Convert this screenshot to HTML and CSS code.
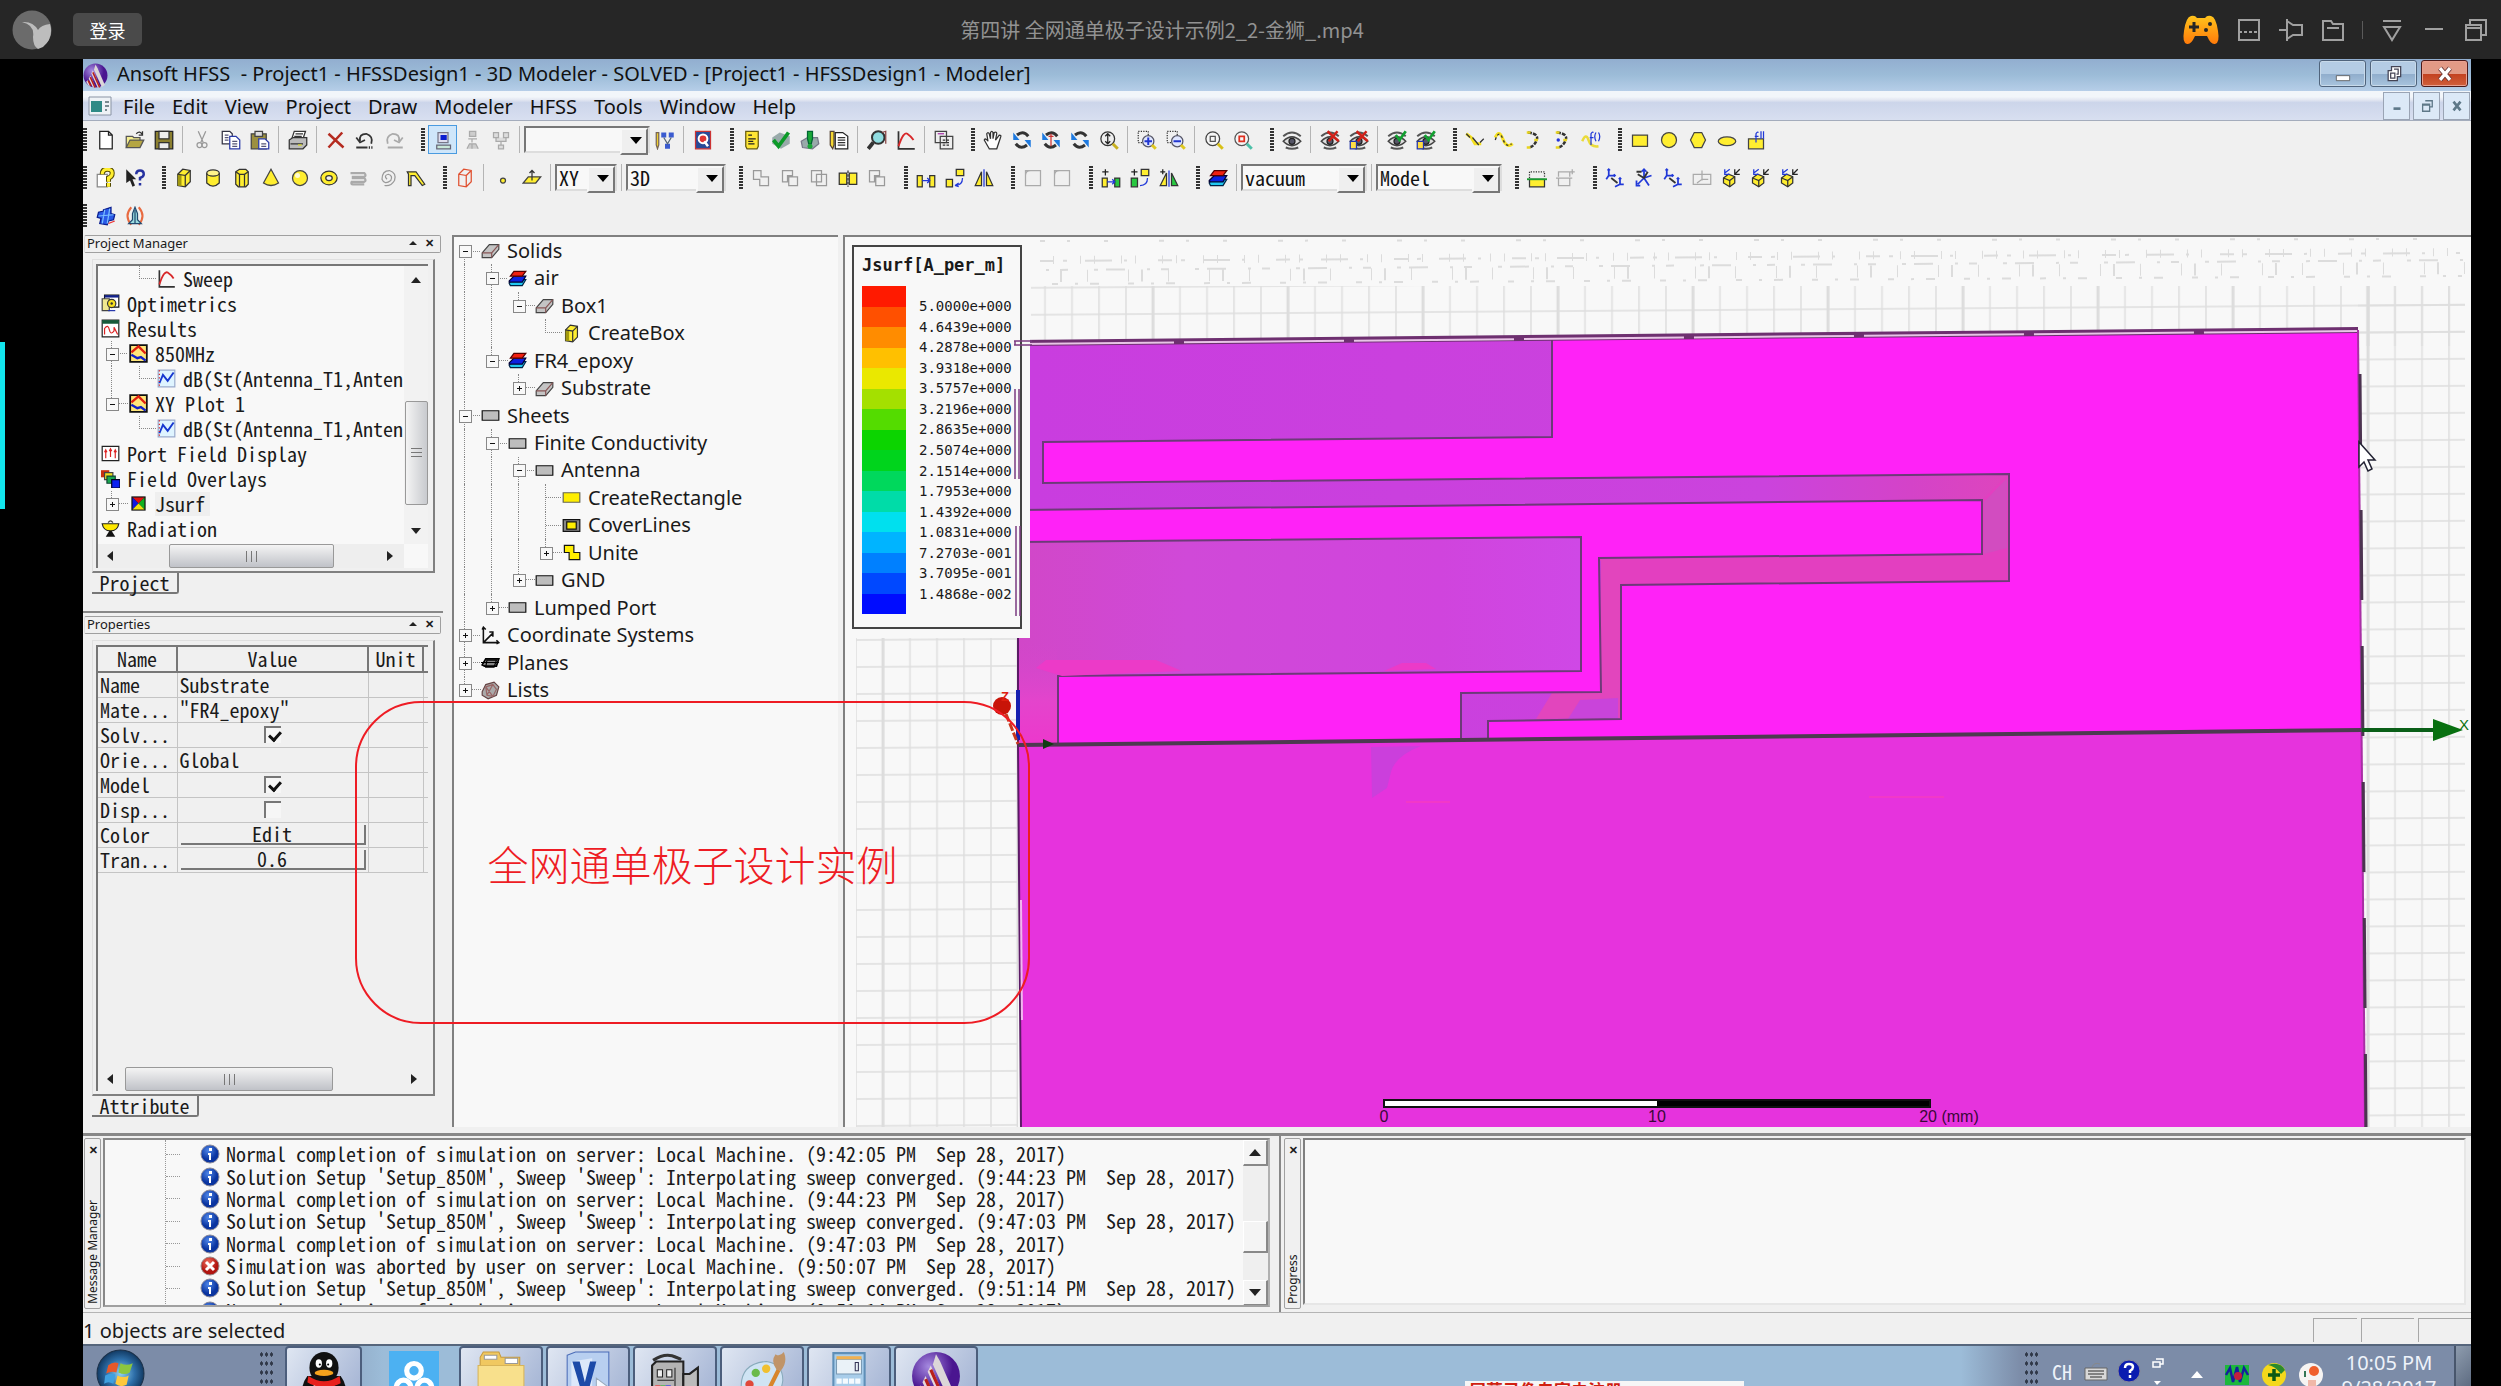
FILE: index.html
```html
<!DOCTYPE html>
<html lang="zh-CN">
<head>
<meta charset="utf-8">
<title>第四讲 全网通单极子设计示例2_2-金狮_.mp4</title>
<link rel="stylesheet" href="styles.css">
</head>
<body>
<svg class="defs" aria-hidden="true">
<defs>
<linearGradient id="pad" x2="0" y2="1"><stop stop-color="#ffc41c"/><stop offset="1" stop-color="#ff7a0a"/></linearGradient>
<radialGradient id="orb"><stop stop-color="#8fd0f0"/><stop offset=".6" stop-color="#2d6ea8"/><stop offset="1" stop-color="#123a63"/></radialGradient>
<radialGradient id="purple" cx=".35" cy=".3"><stop stop-color="#a58ae0"/><stop offset="1" stop-color="#4a1590"/></radialGradient>
<radialGradient id="info" cx=".4" cy=".3"><stop stop-color="#4f86e8"/><stop offset="1" stop-color="#0a34a0"/></radialGradient>
<radialGradient id="err" cx=".4" cy=".3"><stop stop-color="#f07060"/><stop offset="1" stop-color="#b01510"/></radialGradient>
</defs>
<symbol id="new" viewBox="0 0 16 16"><path d="M3 1h7l3 3v11H3zM10 1v3h3" fill="#fff" stroke="#222"/></symbol>
<symbol id="open" viewBox="0 0 16 16"><path d="M1 14V5h5l1 1h5v3" fill="#f5ee90" stroke="#555"/><path d="M1 14l3-6h11l-3 6z" fill="#b5a642" stroke="#555"/><path d="M9 3q3-3 5 1m0-3v3h-3" fill="none" stroke="#333"/></symbol>
<symbol id="save" viewBox="0 0 16 16"><path d="M1 1h14v14H1z" fill="#8c8030" stroke="#222"/><path d="M4 1h8v6H4zM4 10h8v5H4z" fill="#eee" stroke="#333"/></symbol>
<symbol id="cut" viewBox="0 0 16 16"><path d="M5 1l4 9M11 1L7 10" stroke="#999" fill="none"/><circle cx="6" cy="12" r="2" fill="none" stroke="#999"/><circle cx="10" cy="12" r="2" fill="none" stroke="#999"/></symbol>
<symbol id="copy" viewBox="0 0 16 16"><path d="M1 1h6l2 2v8H1z" fill="#fff" stroke="#334"/><path d="M7 5h5l3 3v7H7z" fill="#fff" stroke="#2a3aa8"/><path d="M3 4h3M3 6h3M3 8h3M9 9h4M9 11h4M9 13h4" stroke="#557"/></symbol>
<symbol id="paste" viewBox="0 0 16 16"><path d="M1 3h12v12H1z" fill="#9c9040" stroke="#444"/><path d="M4 1h6v4H4z" fill="#ddd" stroke="#444"/><path d="M7 7h5l3 3v5H7z" fill="#fff" stroke="#2a3aa8"/><path d="M9 11h4M9 13h4" stroke="#557"/></symbol>
<symbol id="print" viewBox="0 0 16 16"><path d="M5 1h9l-2 6H3z" fill="#fff" stroke="#333"/><path d="M1 8l3-2h11v6l-3 3H1z" fill="#bbb" stroke="#333"/><path d="M2 11h10M6 3h6M5 5h6" stroke="#333"/><path d="M8 12h3" stroke="#dd2"/></symbol>
<symbol id="del" viewBox="0 0 16 16"><path d="M2 3l12 11M13 2L2 14" stroke="#b52b20" stroke-width="2" fill="none"/></symbol>
<symbol id="undo" viewBox="0 0 16 16"><path d="M4 9q-1-6 5-6 6 2 4 8M1 6l3 4 4-2" fill="none" stroke="#333" stroke-width="1.4"/><path d="M1 14h9" stroke="#333" stroke-width="1.6"/><path d="M11 14h4" stroke="#333" stroke-width="2" stroke-dasharray="1"/></symbol>
<symbol id="redo" viewBox="0 0 16 16"><path d="M12 9q1-6-5-6-6 2-4 8M15 6l-3 4-4-2" fill="none" stroke="#aaa" stroke-width="1.4"/><path d="M3 14h12" stroke="#aaa" stroke-width="1.6"/></symbol>
<symbol id="pc" viewBox="0 0 16 16"><path d="M4 2h8v8H4z" fill="#dde" stroke="#778"/><path d="M6 4h5v4H6z" fill="#0a1ed0"/><path d="M3 12h11v3H3z" fill="#c8e8d8" stroke="#667"/></symbol>
<symbol id="net1" viewBox="0 0 16 16"><path d="M6 1h5v4H6zM5 7h7M8 7v3M4 15l2-4h5l2 4M8 11v4" fill="#ccc" stroke="#aaa"/></symbol>
<symbol id="net2" viewBox="0 0 16 16"><path d="M2 2h4v4H2zM10 2h4v4h-4zM4 6v3h8V6M8 9v3M6 12h4v3H6z" fill="#ddd" stroke="#aaa"/></symbol>
<symbol id="tree" viewBox="0 0 16 16"><path d="M1 2h2v10l-1 3-1-3z" fill="#f0d030" stroke="#765"/><path d="M5 2h4v4H5zM11 2h4v4h-4zM8 11h4v4H8z" fill="#3a5bd0"/><path d="M7 6l3 5 3-5" stroke="#567" fill="none"/></symbol>
<symbol id="q" viewBox="0 0 16 16"><path d="M2 1h12v14H2z" fill="#284a98" stroke="#c33"/><circle cx="8" cy="7" r="3.500" fill="#d33" stroke="#fff" stroke-width="1.600"/><path d="M9 9l3 4" stroke="#fff" stroke-width="2"/></symbol>
<symbol id="log" viewBox="0 0 16 16"><path d="M3 1h10v12l-1 2H4l-1-2z" fill="#ffe633" stroke="#665c10"/><path d="M5 4h3M5 7h6M5 9h4M5 11h5" stroke="#222"/></symbol>
<symbol id="check" viewBox="0 0 16 16"><path d="M1 6l6-4 8 3v6l-7 4-7-4z" fill="#9aa"/><path d="M2 8l4 5 8-11" fill="none" stroke="#0c9a28" stroke-width="3"/></symbol>
<symbol id="excl" viewBox="0 0 16 16"><path d="M1 9l5-3h8l1 5-5 4-8-1z" fill="#9aa" stroke="#778"/><path d="M6 1h4v6l-1 4H7L6 7z" fill="#1ba838" stroke="#063"/><circle cx="8" cy="13" r="2" fill="#1ba838"/></symbol>
<symbol id="notes" viewBox="0 0 16 16"><path d="M1 1h3v11l-1 3-2-3z" fill="#f5d832" stroke="#543"/><path d="M5 2h6l4 3v10H5z" fill="#fff" stroke="#222"/><path d="M7 6h6M7 8h6M7 10h6M7 12h6" stroke="#333"/></symbol>
<symbol id="magn" viewBox="0 0 16 16"><circle cx="9" cy="6" r="5" fill="#90dce0" stroke="#333" stroke-width="1.6"/><path d="M5 10l-4 5" stroke="#333" stroke-width="3"/><path d="M12 2l3-1v10" stroke="#844" fill="none"/></symbol>
<symbol id="plot" viewBox="0 0 16 16"><path d="M2 1v14h13" fill="none" stroke="#333" stroke-width="1.4"/><path d="M2 13Q6 1 9 3t5 5" fill="none" stroke="#d8282a" stroke-width="1.5"/></symbol>
<symbol id="report" viewBox="0 0 16 16"><path d="M1 1h9v9H1zM5 5h10v10H5z" fill="#eee" stroke="#444"/><path d="M3 3h5" stroke="#a3a"/><path d="M7 8h6M7 10h6M7 12h6" stroke="#333" stroke-dasharray="2 1"/></symbol>
<symbol id="hand" viewBox="0 0 16 16"><path d="M5 15L1 8q1-2 3 1L3 3q1-2 2 0l1 4V2q1-2 2 0v5l1-5q2-1 2 1l-1 5 3-4q2 0 1 2l-3 9z" fill="#fff" stroke="#333"/></symbol>
<symbol id="rot" viewBox="0 0 16 16"><path d="M4 4q5-4 9 1" fill="none" stroke="#333" stroke-width="2.400"/><path d="M12 12q-5 4-9-1" fill="none" stroke="#333" stroke-width="2.400"/><path d="M1 2v6h5zM15 14V8h-5z" fill="#1e7ae0"/></symbol>
<symbol id="rot2" viewBox="0 0 16 16"><use href="#rot"/><path d="M8 3v10M6 5h4" stroke="#c33"/></symbol>
<symbol id="zoomv" viewBox="0 0 16 16"><circle cx="7" cy="7" r="5.5" fill="#eee" stroke="#333"/><path d="M7 3v8M5 5l2-2 2 2M5 9l2 2 2-2" stroke="#222" fill="none"/><path d="M11 11l4 4" stroke="#c8b020" stroke-width="2.4"/></symbol>
<symbol id="zin" viewBox="0 0 16 16"><path d="M1 1h8v9H1z" fill="none" stroke="#333" stroke-dasharray="1"/><circle cx="9" cy="9" r="4.5" fill="#dfe6ff" stroke="#556"/><path d="M6 9h6M9 6v6" stroke="#2035d0" stroke-width="1.6"/><path d="M12 12l3 3" stroke="#e0c820" stroke-width="2.4"/></symbol>
<symbol id="zout" viewBox="0 0 16 16"><path d="M1 1h8v9H1z" fill="none" stroke="#333" stroke-dasharray="1"/><circle cx="9" cy="9" r="4.5" fill="#dfe6ff" stroke="#556"/><path d="M6 9h6" stroke="#2035d0" stroke-width="1.6"/><path d="M12 12l3 3" stroke="#e0c820" stroke-width="2.4"/></symbol>
<symbol id="fit" viewBox="0 0 16 16"><circle cx="7" cy="7" r="5.5" fill="#f6f6f6" stroke="#444"/><path d="M5 5h4v4H5z" fill="none" stroke="#555"/><path d="M11 11l4 4" stroke="#d8c018" stroke-width="2.4"/></symbol>
<symbol id="fitr" viewBox="0 0 16 16"><circle cx="7" cy="7" r="5.5" fill="#f6f6f6" stroke="#555"/><path d="M5 5h4v4H5z" fill="none" stroke="#e03020" stroke-width="1.4"/><path d="M11 11l4 4" stroke="#4cc0a8" stroke-width="2.4"/></symbol>
<symbol id="eye" viewBox="0 0 16 16"><path d="M1 9q7-7 14 0-7 7-14 0z" fill="#ddd" stroke="#444" stroke-width="1.2"/><circle cx="8" cy="9" r="2.4" fill="#556" stroke="#222"/><path d="M1 5q7-6 14 0M3 14q5 2 10 0" fill="none" stroke="#555" stroke-width="1.6"/></symbol>
<symbol id="eyex" viewBox="0 0 16 16"><use href="#eye"/><path d="M6 1l9 8M14 1L7 9" stroke="#d02018" stroke-width="2"/></symbol>
<symbol id="eyex2" viewBox="0 0 16 16"><use href="#eyex"/><path d="M1 9h5v6H1z" fill="#fd4" stroke="#23a"/></symbol>
<symbol id="eyec" viewBox="0 0 16 16"><use href="#eye"/><path d="M7 4l3 4 5-7" stroke="#12a030" stroke-width="2.2" fill="none"/></symbol>
<symbol id="eyec2" viewBox="0 0 16 16"><use href="#eyec"/><path d="M1 9h5v6H1z" fill="#fd4" stroke="#23a"/></symbol>
<symbol id="ln" viewBox="0 0 16 16"><path d="M1 3l4 3 3 5h5" fill="none" stroke="#f5e020" stroke-width="2.4"/><path d="M1 3l3 3M6 6l5 6M12 10l3-3" stroke="#333"/></symbol>
<symbol id="spl" viewBox="0 0 16 16"><path d="M1 6q3-7 6 1t8 4" fill="none" stroke="#f5e020" stroke-width="2.4"/><path d="M1 8q3-9 6-1t7 4" fill="none" stroke="#333" stroke-dasharray="2"/></symbol>
<symbol id="arc" viewBox="0 0 16 16"><path d="M4 2q9 1 7 6t-6 6" fill="none" stroke="#333" stroke-width="2" stroke-dasharray="3 1"/><path d="M3 1h3v2H3zM9 7h3v2H9zM3 13h3v2H3z" fill="#e8d420"/></symbol>
<symbol id="arc2" viewBox="0 0 16 16"><use href="#arc"/><circle cx="5" cy="8" r="1.4" fill="#23d"/></symbol>
<symbol id="eqn" viewBox="0 0 16 16"><path d="M1 9q3-7 5-1t8 5" fill="none" stroke="#eadb3a" stroke-width="2"/><path d="M8 12V3q1-2 2-1M7 6h3M12 2q-2 3 0 7M14 2q2 3 0 7" fill="none" stroke="#2038d8"/></symbol>
<symbol id="rect" viewBox="0 0 16 16"><path d="M2 4h12v9H2z" fill="#ffee30" stroke="#444"/></symbol>
<symbol id="circ" viewBox="0 0 16 16"><circle cx="8" cy="8" r="6" fill="#ffee30" stroke="#444"/></symbol>
<symbol id="hex" viewBox="0 0 16 16"><path d="M5 2h6l3 6-3 6H5L2 8z" fill="#ffee30" stroke="#444"/></symbol>
<symbol id="ell" viewBox="0 0 16 16"><ellipse cx="8" cy="9" rx="7" ry="3.500" fill="#ffee30" stroke="#444"/></symbol>
<symbol id="eqs" viewBox="0 0 16 16"><path d="M2 7h12v8H2z" fill="#ffee30" stroke="#444"/><path d="M8 10V3q1-2 2-1M7 5h3M12 1v6M14 1v6" stroke="#2038d8" fill="none"/></symbol>
<symbol id="help" viewBox="0 0 16 16"><path d="M1 5h8v10H1z" fill="#fff" stroke="#888"/><path d="M5 5q0-4 4-4t4 3q0 3-3 4v3M10 12v3" fill="none" stroke="#544a00" stroke-width="4"/><path d="M5 5q0-4 4-4t4 3q0 3-3 4v3M10 12v3" fill="none" stroke="#ffee30" stroke-width="2.4"/></symbol>
<symbol id="whats" viewBox="0 0 16 16"><path d="M1 1v11l3-2 2 5 2-1-2-5h3z" fill="#222"/><path d="M9 5q0-3 3-3t3 3q0 2-3 3v2M12 12v2" fill="none" stroke="#2632a0" stroke-width="2"/></symbol>
<symbol id="box" viewBox="0 0 16 16"><path d="M3 5l4-4 6 1v9l-4 4-6-1z" fill="#ffee30" stroke="#333"/><path d="M3 5l3 .5v9L3 14z" fill="#a39a10"/><path d="M3 5l6 1v9M9 6l4-4" fill="none" stroke="#333"/></symbol>
<symbol id="cyl" viewBox="0 0 16 16"><path d="M3 4v8q5 5 10 0V4" fill="#ffee30" stroke="#333"/><ellipse cx="8" cy="4" rx="5" ry="2.5" fill="#fff48a" stroke="#333"/></symbol>
<symbol id="prism" viewBox="0 0 16 16"><path d="M3 3l3-2h5l2 2v10l-2 2H5l-2-2z" fill="#ffee30" stroke="#333"/><path d="M6 5v10M10 5v10M3 3l3 2h4l3-2" fill="none" stroke="#333"/></symbol>
<symbol id="cone" viewBox="0 0 16 16"><path d="M8 1l6 11q-6 4-12 0z" fill="#ffee30" stroke="#444"/></symbol>
<symbol id="sph" viewBox="0 0 16 16"><circle cx="8" cy="8" r="6" fill="#ffee30" stroke="#444"/><circle cx="6" cy="6" r="2" fill="#fffbd0"/></symbol>
<symbol id="torus" viewBox="0 0 16 16"><ellipse cx="8" cy="8" rx="6.5" ry="5.5" fill="#ffee30" stroke="#333"/><ellipse cx="8" cy="8" rx="2.6" ry="2" fill="#f0f0f0" stroke="#333"/></symbol>
<symbol id="helix" viewBox="0 0 16 16"><path d="M2 4h11q2 2 0 3H3m0 1h10q2 2 0 3H3q-1 2 1 2h9" fill="none" stroke="#aaa" stroke-width="1.8"/></symbol>
<symbol id="spiral" viewBox="0 0 16 16"><path d="M8 9q-3-3 1-4 4 1 2 5-5 4-7-1 0-7 6-7 6 2 4 8-3 5-8 4" fill="none" stroke="#999"/></symbol>
<symbol id="bond" viewBox="0 0 16 16"><path d="M1 3h7l7 10-2 1-6-8H4v8H2V5z" fill="#ffee30" stroke="#333"/></symbol>
<symbol id="redbox" viewBox="0 0 16 16"><path d="M3 5l4-4 6 1v9l-4 4-6-1zM3 5l6 1v9M9 6l4-4" fill="none" stroke="#e05030"/></symbol>
<symbol id="dot" viewBox="0 0 16 16"><circle cx="8" cy="10" r="2" fill="#ffee30" stroke="#444"/></symbol>
<symbol id="plane" viewBox="0 0 16 16"><path d="M1 12l4-5h10l-4 5z" fill="#ffee30" stroke="#444"/><path d="M8 10V2M6 4l2-2 2 2" fill="none" stroke="#333"/></symbol>
<symbol id="unite" viewBox="0 0 16 16"><path d="M2 2h6v5h6v7H7V9H2z" fill="none" stroke="#999"/></symbol>
<symbol id="sub" viewBox="0 0 16 16"><path d="M2 2h8v4H6v5H2zM7 7h7v7H7z" fill="none" stroke="#999"/></symbol>
<symbol id="inter" viewBox="0 0 16 16"><path d="M2 2h8v9H2zM6 5h8v9H6z" fill="none" stroke="#999"/></symbol>
<symbol id="split" viewBox="0 0 16 16"><path d="M1 4h6v9H1zM9 4h6v9H9z" fill="#ffee30" stroke="#333"/><path d="M8 2v13" stroke="#333" stroke-dasharray="2 1"/></symbol>
<symbol id="move" viewBox="0 0 16 16"><path d="M1 6h4v9H1zM11 6h4v9h-4z" fill="#ffee30" stroke="#333"/><path d="M5 10h6M9 8l2 2-2 2" fill="none" stroke="#2038d8"/></symbol>
<symbol id="rotm" viewBox="0 0 16 16"><path d="M1 9h5v6H1zM9 1h6v5H9z" fill="#ffee30" stroke="#333"/><path d="M8 14q6 0 6-6M8 14l3-2M8 14l3 1" fill="none" stroke="#2038d8"/></symbol>
<symbol id="mirror" viewBox="0 0 16 16"><path d="M6 3v11H1zM10 3v11h5z" fill="#ffee30" stroke="#333"/><path d="M8 1v14" stroke="#2038d8"/></symbol>
<symbol id="fillet" viewBox="0 0 16 16"><path d="M2 14V6q0-4 4-4h8v12zM2 6V2h4" fill="none" stroke="#aaa"/></symbol>
<symbol id="dupa" viewBox="0 0 16 16"><path d="M1 8h4v7H1z" fill="#ffee30" stroke="#333"/><path d="M11 8h4v7h-4z" fill="#28c840" stroke="#333"/><path d="M5 11h6M9 9l2 2-2 2" fill="none" stroke="#2038d8"/><path d="M1 3h5M3.500 1v5" stroke="#222"/></symbol>
<symbol id="dupr" viewBox="0 0 16 16"><path d="M1 8h5v7H1z" fill="#28c840" stroke="#333"/><path d="M9 1h6v5H9z" fill="#ffee30" stroke="#333"/><path d="M8 14q6 0 6-6" fill="none" stroke="#2038d8"/><path d="M1 3h5M3.500 1v5" stroke="#222"/></symbol>
<symbol id="dupm" viewBox="0 0 16 16"><path d="M6 4v10H1z" fill="#ffee30" stroke="#333"/><path d="M10 4v10h5z" fill="#28c840" stroke="#333"/><path d="M8 2v13" stroke="#2038d8"/><path d="M1 3h4M3 1v4" stroke="#222"/></symbol>
<symbol id="mat" viewBox="0 0 16 16"><path d="M1 12l2-3h12l-3 5H2z" fill="#20c8f0" stroke="#024"/><path d="M1 10l4-4h10l-3 5H1z" fill="#0c20e0" stroke="#003"/><path d="M2 6l3-4h10l-3 4z" fill="#f02010" stroke="#500"/></symbol>
<symbol id="sec" viewBox="0 0 16 16"><path d="M2 9h12v6H2z" fill="#ffee30" stroke="#333"/><path d="M2 8V3h12v5" fill="none" stroke="#333" stroke-dasharray="1"/><path d="M0 9h16" stroke="#1a9a30" stroke-width="1.500"/></symbol>
<symbol id="secx" viewBox="0 0 16 16"><path d="M2 8h9v6H2zM2 7V3h9v4M0 8h13M13 1v4M11 3h4" fill="none" stroke="#aaa"/></symbol>
<symbol id="cs1" viewBox="0 0 16 16"><path d="M3 1v5h5M3 6L1 9M12 8v5h3M12 13l-4 2M2 2l1-1 1 1M11 9l1-1 1 1M7 5l1 1-1 1" fill="none" stroke="#2038d8" stroke-width="1.400"/><path d="M5 8l5 4" stroke="#333" stroke-width="1.400"/></symbol>
<symbol id="cs2" viewBox="0 0 16 16"><path d="M8 8V1M8 8l6-2M8 8l-5 5M8 8l4 6M6 3l2-2 2 2M2 10v4h3" fill="none" stroke="#2038d8" stroke-width="1.400"/><path d="M2 3h4M3 5l5 3 3-5" fill="none" stroke="#333" stroke-width="1.500"/></symbol>
<symbol id="pl2" viewBox="0 0 16 16"><path d="M1 5h14v8H1zM8 10V2M4 12l4-3h5" fill="none" stroke="#aaa"/></symbol>
<symbol id="face" viewBox="0 0 16 16"><path d="M2 8l4-3 5 2v5l-4 3-5-3z" fill="#ffee30" stroke="#333"/><path d="M2 8l5 2 4-3M7 10v5" fill="none" stroke="#333"/><path d="M3 1v4h4M3 4l4-3" fill="none" stroke="#2038d8"/><path d="M11 1v4h4M11 5l4-4" fill="none" stroke="#222"/></symbol>
<symbol id="mesh" viewBox="0 0 16 16"><path d="M6 3l6-2v5l3 1-1 4-4 1-1 3-6-1 1-4-3-1 1-4 4-1z" fill="#2a5ae8" stroke="#0a1e90"/><path d="M2 8l12-1M7 3L5 14M11 2L9 14" stroke="#7ac0ff"/><path d="M10 14l5-2" stroke="#e33"/></symbol>
<symbol id="val" viewBox="0 0 16 16"><path d="M5 1Q-1 8 5 15M11 1q6 7 0 14" fill="none" stroke="#e86a40" stroke-width="1.600"/><path d="M8 1l2 5v5l3 3H3l3-3V6z" fill="#9adce0" stroke="#224a70"/><path d="M8 3v11" stroke="#224a70"/></symbol>
<symbol id="solid" viewBox="0 0 16 16"><path d="M1 10l6-7h8v4l-6 7H1z" fill="#c4c4c4" stroke="#444"/><path d="M1 10h8l6-7M9 10v4" fill="none" stroke="#855"/></symbol>
<symbol id="sheet" viewBox="0 0 16 16"><path d="M1 4h14v8H1z" fill="#bdbdbd" stroke="#111"/></symbol>
<symbol id="ysheet" viewBox="0 0 16 16"><path d="M1 4h14v8H1z" fill="#fe0" stroke="#665"/></symbol>
<symbol id="cover" viewBox="0 0 16 16"><path d="M1 3h14v10H1z" fill="#888" stroke="#111"/><path d="M4 5h8v6H4z" fill="#fe0" stroke="#111"/></symbol>
<symbol id="uni" viewBox="0 0 16 16"><path d="M2 2h8v6h5v6H6V8H2z" fill="#fe0" stroke="#111"/></symbol>
<symbol id="axes" viewBox="0 0 16 16"><path d="M2 1v13h13M2 14l8-8M1 3l1-2 2 2M10 9V5H7M13 12l2 2-2 1" fill="none" stroke="#111" stroke-width="1.300"/></symbol>
<symbol id="planes" viewBox="0 0 16 16"><path d="M1 10l3-5h11l-2 6H3z" fill="#888" stroke="#000" stroke-width="1.400"/><path d="M0 8h15M5 6h8l-2 6H4z" stroke="#000" fill="none"/></symbol>
<symbol id="lists" viewBox="0 0 16 16"><path d="M1 9l3-6 7-2 4 4-2 7-7 3-5-3z" fill="#aaa" stroke="#644"/><path d="M4 5l6-2 3 4-3 6-5-1zM4 5l6 8M10 3l-5 9" fill="none" stroke="#966"/></symbol>
<symbol id="opti" viewBox="0 0 16 16"><path d="M3 1h12v10H3z" fill="#fff" stroke="#111"/><path d="M3 1h12v2H3z" fill="#12208c"/><path d="M1 4h6v10H1z" fill="#f0e890" stroke="#444"/><circle cx="9" cy="8" r="3.500" fill="#f8e020" stroke="#333"/><circle cx="9" cy="8" r="1" fill="#333"/><path d="M6 14h6" stroke="#23a"/></symbol>
<symbol id="results" viewBox="0 0 16 16"><path d="M1 1h14v14H1z" fill="#fff" stroke="#222"/><path d="M1 1h14v3H1z" fill="#175a3a"/><path d="M3 13V8q3-4 4 1t4 1V7l3 6" fill="none" stroke="#d22"/></symbol>
<symbol id="rep" viewBox="0 0 16 16"><path d="M1 1h14v14H1z" fill="#ffe67a" stroke="#111" stroke-width="1.500"/><path d="M2 7l6-5 6 6" fill="none" stroke="#e02010" stroke-width="2"/><path d="M2 9l5 3 3-1 4 3" fill="none" stroke="#1020c8" stroke-width="2"/></symbol>
<symbol id="trace" viewBox="0 0 16 16"><path d="M1 1h14v14H1z" fill="#dff4ff" stroke="#9ac"/><path d="M2 12l3-7 4 5 5-7" fill="none" stroke="#1838d0" stroke-width="1.600"/><path d="M2 1v14" stroke="#d22" stroke-dasharray="1 2"/></symbol>
<symbol id="port" viewBox="0 0 16 16"><path d="M1 2h14v12H1z" fill="#fff" stroke="#222"/><path d="M4 12V6M8 11V4M12 12V6M3 7l1-2 1 2M7 6l1-2 1 2M11 7l1-2 1 2" fill="none" stroke="#d22"/></symbol>
<symbol id="over" viewBox="0 0 16 16"><path d="M0 1h7v6H0z" fill="#c83010"/><path d="M3 3h7v6H3z" fill="#f0e020" stroke="#444"/><path d="M5 6h7v6H5z" fill="#18a850" stroke="#143"/><path d="M9 9h7v7H9z" fill="#0a20f0" stroke="#002"/></symbol>
<symbol id="jsurf" viewBox="0 0 16 16"><path d="M2 2h12v12H2z" fill="#111"/><path d="M3 3h10L8 8z" fill="#e01010"/><path d="M3 3v10l5-5z" fill="#1018e0"/><path d="M13 3v10L8 8z" fill="#10b020"/><path d="M3 13h10L8 8z" fill="#f0e010"/></symbol>
<symbol id="rad" viewBox="0 0 16 16"><path d="M1 4h14q-1 6-7 6T1 4z" fill="#ffe800" stroke="#222"/><path d="M6 3q2-3 4 0" fill="none" stroke="#444"/><path d="M7 10h2l3 5H4z" fill="#111"/></symbol>
<symbol id="i" viewBox="0 0 20 20"><circle cx="10" cy="10" r="9" fill="url(#info)" stroke="#889"/><path d="M9 4h3v3H9zM8 9h3v7H9v-5H8z" fill="#fff"/></symbol>
<symbol id="x" viewBox="0 0 20 20"><circle cx="10" cy="10" r="9" fill="url(#err)" stroke="#988"/><path d="M6 6l8 8M14 6l-8 8" stroke="#fff" stroke-width="3"/></symbol>
<symbol id="ansoft" viewBox="0 0 48 48"><circle cx="24" cy="24" r="23" fill="url(#purple)"/><path d="M24 3l4 7 14 32-6 4-15-33z" fill="#dcd6d8"/><path d="M19 14l14 33h-5L16 20zM14 24l10 23h-5l-8-17zM9 33l6 12-5-3-4-6z" fill="#e3d8dc"/><path d="M19 18l13 29M14 27l9 20M10 34l5 10" stroke="#b8201a" stroke-width="3"/></symbol>
</svg>

<header class="player">
  <div class="brand">
    <svg class="avatar" viewBox="0 0 40 40" aria-hidden="true"><circle cx="20" cy="20" r="19.500" fill="#6b6b6b"/><path d="M10 12q11-1 16 8 3-5 12-6 4 14-7 23l-5 2q-5-3-5-12 2-12-11-15z" fill="#bdbdbd"/></svg>
    <button class="login">登录</button>
  </div>
  <h1 class="video-name">第四讲 全网通单极子设计示例2_2-金狮_.mp4</h1>
  <div class="player-tools">
    <button aria-label="游戏"><svg viewBox="0 0 36 30"><path d="M8 1q4-1 6 2h8q2-3 6-2 5 1 7 15 2 12-3 13-4 1-8-8h-12q-4 9-8 8-5-1-3-13Q3 2 8 1z" fill="url(#pad)"/><path d="M11 7v10M6 12h10" stroke="#262626" stroke-width="3"/><circle cx="27" cy="9" r="2" fill="#262626"/><circle cx="23" cy="15" r="2" fill="#262626"/></svg></button>
    <button aria-label="迷你模式"><svg viewBox="0 0 26 26"><path d="M3 3h20v20H3z"/><path d="M3 15h20" stroke-dasharray="3 2"/></svg></button>
    <button aria-label="置顶"><svg viewBox="0 0 26 26"><path d="M1 13h8M9 2v22M9 4l6 4h9v10h-9l-6 4"/></svg></button>
    <button aria-label="打开文件"><svg viewBox="0 0 26 26"><path d="M3 4h8l2 3h10v16H3zM7 11h12"/></svg></button>
    <span class="rule"></span>
    <button aria-label="菜单"><svg viewBox="0 0 26 26"><path d="M4 4h18M5 10h16l-8 13z"/></svg></button>
    <button aria-label="最小化"><svg viewBox="0 0 26 26"><path d="M4 12h18"/></svg></button>
    <button aria-label="还原"><svg viewBox="0 0 26 26"><path d="M3 8h15v15H3zM3 11h15M7 8V3h16v15h-5"/></svg></button>
  </div>
</header>

<main class="stage">
<div class="edge"></div>
<div class="app">
  <div class="titlebar">
    <svg class="app-icon"><use href="#ansoft"/></svg>
    <span class="app-name">Ansoft HFSS &nbsp;- Project1 - HFSSDesign1 - 3D Modeler - SOLVED - [Project1 - HFSSDesign1 - Modeler]</span>
    <div class="win">
      <button aria-label="Minimize"><svg viewBox="0 0 24 24"><path d="M4 14h16v6H4z" fill="#fff" stroke="#555"/></svg></button>
      <button aria-label="Restore"><svg viewBox="0 0 24 24"><path d="M9 3h11v12h-4v5H5V8h4z" fill="#fff" stroke="#445" stroke-width="1.500"/><path d="M8 11h5v6H8zM12 6h5v6h-2" fill="none" stroke="#445" stroke-width="1.500"/></svg></button>
      <button class="close" aria-label="Close"><svg viewBox="0 0 24 24"><path d="M6 5l12 14M18 5L6 19" stroke="#633" stroke-width="6"/><path d="M6 5l12 14M18 5L6 19" stroke="#fff" stroke-width="4"/></svg></button>
    </div>
  </div>
  <nav class="menubar">
    <svg class="doc" viewBox="0 0 24 20"><path d="M1 1h22v18H1z" fill="#eef2f6" stroke="#8a94a4"/><path d="M3 5h11v11H3z" fill="#2f8a86"/><path d="M17 6h4M17 10h4M17 14h2" stroke="#7a8a90" stroke-width="2"/></svg>
    <a href="#file">File</a><a href="#edit">Edit</a><a href="#view">View</a><a href="#project">Project</a><a href="#draw">Draw</a><a href="#modeler">Modeler</a><a href="#hfss">HFSS</a><a href="#tools">Tools</a><a href="#window">Window</a><a href="#help-menu">Help</a>
    <div class="mdi">
      <button aria-label="Minimize document"><svg viewBox="0 0 16 16"><path d="M4 11h8" stroke-width="3"/></svg></button>
      <button aria-label="Restore document"><svg viewBox="0 0 16 16"><path d="M6 2h8v7h-3M3 6h8v8H3zM3 7h8" stroke-width="1.500"/></svg></button>
      <button aria-label="Close document"><svg viewBox="0 0 16 16"><path d="M4 3l8 10M12 3L4 13" stroke-width="3"/></svg></button>
    </div>
  </nav>

  <div class="bars">
    <div class="bar">
      <i class="grip"></i>
      <button aria-label="New"><svg><use href="#new"/></svg></button><button aria-label="Open"><svg><use href="#open"/></svg></button><button aria-label="Save"><svg><use href="#save"/></svg></button>
      <i class="sep"></i>
      <button aria-label="Cut"><svg><use href="#cut"/></svg></button><button aria-label="Copy"><svg><use href="#copy"/></svg></button><button aria-label="Paste"><svg><use href="#paste"/></svg></button>
      <i class="sep"></i>
      <button aria-label="Print"><svg><use href="#print"/></svg></button>
      <i class="sep"></i>
      <button aria-label="Delete"><svg><use href="#del"/></svg></button><button aria-label="Undo"><svg><use href="#undo"/></svg></button><button aria-label="Redo"><svg><use href="#redo"/></svg></button>
      <i class="grip"></i>
      <button class="on" aria-label="Local machine"><svg><use href="#pc"/></svg></button><button aria-label="Remote machine"><svg><use href="#net1"/></svg></button><button aria-label="Distributed"><svg><use href="#net2"/></svg></button>
      <i class="sep"></i>
      <span class="combo wide"><select aria-label="Machine"><option></option></select></span>
      <button aria-label="Edit distributed machines"><svg><use href="#tree"/></svg></button>
      <i class="sep"></i>
      <button aria-label="Queue"><svg><use href="#q"/></svg></button>
      <i class="grip"></i>
      <button aria-label="Solution setup"><svg><use href="#log"/></svg></button><button aria-label="Validate"><svg><use href="#check"/></svg></button><button aria-label="Analyze all"><svg><use href="#excl"/></svg></button><button aria-label="Edit notes"><svg><use href="#notes"/></svg></button>
      <i class="sep"></i>
      <button aria-label="Solution data"><svg><use href="#magn"/></svg></button><button aria-label="Results"><svg><use href="#plot"/></svg></button>
      <i class="sep"></i>
      <button aria-label="Copy image"><svg><use href="#report"/></svg></button>
      <i class="grip"></i>
      <button aria-label="Pan"><svg><use href="#hand"/></svg></button><button aria-label="Rotate model"><svg><use href="#rot"/></svg></button><button aria-label="Rotate axis"><svg><use href="#rot2"/></svg></button><button aria-label="Rotate screen"><svg><use href="#rot"/></svg></button><button aria-label="Zoom"><svg><use href="#zoomv"/></svg></button>
      <i class="sep"></i>
      <button aria-label="Zoom in"><svg><use href="#zin"/></svg></button><button aria-label="Zoom out"><svg><use href="#zout"/></svg></button>
      <i class="sep"></i>
      <button aria-label="Fit all"><svg><use href="#fit"/></svg></button><button aria-label="Fit selection"><svg><use href="#fitr"/></svg></button>
      <i class="grip"></i>
      <button aria-label="Visibility"><svg><use href="#eye"/></svg></button>
      <i class="sep"></i>
      <button aria-label="Hide"><svg><use href="#eyex"/></svg></button><button aria-label="Hide in view"><svg><use href="#eyex2"/></svg></button>
      <i class="sep"></i>
      <button aria-label="Show"><svg><use href="#eyec"/></svg></button><button aria-label="Show in view"><svg><use href="#eyec2"/></svg></button>
      <i class="grip"></i>
      <button aria-label="Line"><svg><use href="#ln"/></svg></button><button aria-label="Spline"><svg><use href="#spl"/></svg></button><button aria-label="Arc"><svg><use href="#arc"/></svg></button><button aria-label="Centre arc"><svg><use href="#arc2"/></svg></button><button aria-label="Equation curve"><svg><use href="#eqn"/></svg></button>
      <i class="grip"></i>
      <button aria-label="Rectangle"><svg><use href="#rect"/></svg></button><button aria-label="Circle"><svg><use href="#circ"/></svg></button><button aria-label="Polygon"><svg><use href="#hex"/></svg></button><button aria-label="Ellipse"><svg><use href="#ell"/></svg></button><button aria-label="Equation surface"><svg><use href="#eqs"/></svg></button>
    </div>
    <div class="bar">
      <i class="grip"></i>
      <button aria-label="Help"><svg><use href="#help"/></svg></button><button aria-label="What is this"><svg><use href="#whats"/></svg></button>
      <i class="grip"></i>
      <button aria-label="Box"><svg><use href="#box"/></svg></button><button aria-label="Cylinder"><svg><use href="#cyl"/></svg></button><button aria-label="Polyhedron"><svg><use href="#prism"/></svg></button><button aria-label="Cone"><svg><use href="#cone"/></svg></button><button aria-label="Sphere"><svg><use href="#sph"/></svg></button><button aria-label="Torus"><svg><use href="#torus"/></svg></button><button aria-label="Helix"><svg><use href="#helix"/></svg></button><button aria-label="Spiral"><svg><use href="#spiral"/></svg></button><button aria-label="Bondwire"><svg><use href="#bond"/></svg></button>
      <i class="grip"></i>
      <button aria-label="Region"><svg><use href="#redbox"/></svg></button>
      <i class="sep"></i>
      <button aria-label="Point"><svg><use href="#dot"/></svg></button><button aria-label="Plane"><svg><use href="#plane"/></svg></button>
      <i class="sep"></i>
      <span class="combo small"><select aria-label="Drawing plane"><option>XY</option></select></span>
      <i class="sep"></i>
      <span class="combo medium"><select aria-label="Movement mode"><option>3D</option></select></span>
      <i class="grip"></i>
      <button aria-label="Unite"><svg><use href="#unite"/></svg></button><button aria-label="Subtract"><svg><use href="#sub"/></svg></button><button aria-label="Intersect"><svg><use href="#inter"/></svg></button><button aria-label="Split"><svg><use href="#split"/></svg></button><button aria-label="Imprint"><svg><use href="#sub"/></svg></button>
      <i class="grip"></i>
      <button aria-label="Move"><svg><use href="#move"/></svg></button><button aria-label="Rotate"><svg><use href="#rotm"/></svg></button><button aria-label="Mirror"><svg><use href="#mirror"/></svg></button>
      <i class="grip"></i>
      <button aria-label="Fillet"><svg><use href="#fillet"/></svg></button><button aria-label="Chamfer"><svg><use href="#fillet"/></svg></button>
      <i class="grip"></i>
      <button aria-label="Duplicate along line"><svg><use href="#dupa"/></svg></button><button aria-label="Duplicate around axis"><svg><use href="#dupr"/></svg></button><button aria-label="Duplicate mirror"><svg><use href="#dupm"/></svg></button>
      <i class="grip"></i>
      <button aria-label="Assign material"><svg><use href="#mat"/></svg></button>
      <i class="sep"></i>
      <span class="combo wide"><select aria-label="Material"><option>vacuum</option></select></span>
      <i class="sep"></i>
      <span class="combo wide"><select aria-label="Model type"><option>Model</option></select></span>
      <i class="grip"></i>
      <button aria-label="Section"><svg><use href="#sec"/></svg></button><button aria-label="Add section"><svg><use href="#secx"/></svg></button>
      <i class="grip"></i>
      <button aria-label="Offset CS"><svg><use href="#cs1"/></svg></button><button aria-label="Rotated CS"><svg><use href="#cs2"/></svg></button><button aria-label="Offset and rotated CS"><svg><use href="#cs1"/></svg></button><button aria-label="Set working CS"><svg><use href="#pl2"/></svg></button><button aria-label="Face CS"><svg><use href="#face"/></svg></button><button aria-label="Edge CS"><svg><use href="#face"/></svg></button><button aria-label="Object CS"><svg><use href="#face"/></svg></button>
    </div>
    <div class="bar">
      <i class="grip"></i>
      <button aria-label="Mesh"><svg><use href="#mesh"/></svg></button><button aria-label="Boundary display"><svg><use href="#val"/></svg></button>
    </div>
  </div>

  <div class="work">
    <aside class="dock">
      <section class="panel">
        <h2 class="cap">Project Manager<span class="cap-btns"><i class="up"></i><b>✕</b></span></h2>
        <div class="frame pm-frame">
          <div class="pm">
            <ul class="pm-tree">
              <li><i class="g"></i><i class="g l"></i><svg><use href="#plot"/></svg>Sweep</li>
              <li><svg><use href="#opti"/></svg>Optimetrics</li>
              <li><svg><use href="#results"/></svg>Results</li>
              <li><i class="g t minus"></i><svg><use href="#rep"/></svg>850MHz</li>
              <li><i class="g v"></i><i class="g l"></i><svg><use href="#trace"/></svg>dB(St(Antenna_T1,Anten</li>
              <li><i class="g l minus"></i><svg><use href="#rep"/></svg>XY Plot 1</li>
              <li><i class="g"></i><i class="g l"></i><svg><use href="#trace"/></svg>dB(St(Antenna_T1,Anten</li>
              <li><svg><use href="#port"/></svg>Port Field Display</li>
              <li><svg><use href="#over"/></svg>Field Overlays</li>
              <li><i class="g l plus"></i><svg><use href="#jsurf"/></svg><span class="sel">Jsurf</span></li>
              <li><svg><use href="#rad"/></svg>Radiation</li>
            </ul>
            <div class="vbar"><i class="up"></i><i class="thumb"></i><i class="down"></i></div>
            <div class="hbar"><i class="left"></i><i class="thumb"></i><i class="right"></i></div>
          </div>
        </div>
        <button class="tab project-tab">Project</button>
      </section>
      <section class="panel grow">
        <h2 class="cap">Properties<span class="cap-btns"><i class="up"></i><b>✕</b></span></h2>
        <div class="frame grow">
          <div class="props">
            <table>
              <colgroup><col class="c1"><col class="c2"><col class="c3"><col></colgroup>
              <thead><tr><th>Name</th><th>Value</th><th>Unit</th><th></th></tr></thead>
              <tbody>
                <tr><td>Name</td><td>Substrate</td><td></td><td></td></tr>
                <tr><td>Mate...</td><td>"FR4_epoxy"</td><td></td><td></td></tr>
                <tr><td><label for="p-solve">Solv...</label></td><td class="mid"><input id="p-solve" type="checkbox" checked></td><td></td><td></td></tr>
                <tr><td>Orie...</td><td>Global</td><td></td><td></td></tr>
                <tr><td><label for="p-model">Model</label></td><td class="mid"><input id="p-model" type="checkbox" checked></td><td></td><td></td></tr>
                <tr><td><label for="p-disp">Disp...</label></td><td class="mid"><input id="p-disp" type="checkbox"></td><td></td><td></td></tr>
                <tr><td>Color</td><td class="btn"><button>Edit</button></td><td></td><td></td></tr>
                <tr><td>Tran...</td><td class="btn"><button>0.6</button></td><td></td><td></td></tr>
              </tbody>
            </table>
            <div class="hbar long"><i class="left"></i><i class="thumb"></i><i class="right"></i></div>
          </div>
        </div>
        <button class="tab attribute-tab">Attribute</button>
      </section>
    </aside>

    <section class="model-pane">
      <ul class="model-tree">
        <li><i class="g d minus"></i><svg><use href="#solid"/></svg>Solids</li>
        <li><i class="g v"></i><i class="g t minus"></i><svg><use href="#mat"/></svg>air</li>
        <li><i class="g v"></i><i class="g v"></i><i class="g l minus"></i><svg><use href="#solid"/></svg>Box1</li>
        <li><i class="g v"></i><i class="g v"></i><i class="g"></i><i class="g l"></i><svg><use href="#box"/></svg>CreateBox</li>
        <li><i class="g v"></i><i class="g l minus"></i><svg><use href="#mat"/></svg>FR4_epoxy</li>
        <li><i class="g v"></i><i class="g"></i><i class="g l plus"></i><svg><use href="#solid"/></svg>Substrate</li>
        <li><i class="g t minus"></i><svg><use href="#sheet"/></svg>Sheets</li>
        <li><i class="g v"></i><i class="g t minus"></i><svg><use href="#sheet"/></svg>Finite Conductivity</li>
        <li><i class="g v"></i><i class="g v"></i><i class="g t minus"></i><svg><use href="#sheet"/></svg>Antenna</li>
        <li><i class="g v"></i><i class="g v"></i><i class="g v"></i><i class="g t"></i><svg><use href="#ysheet"/></svg>CreateRectangle</li>
        <li><i class="g v"></i><i class="g v"></i><i class="g v"></i><i class="g t"></i><svg><use href="#cover"/></svg>CoverLines</li>
        <li><i class="g v"></i><i class="g v"></i><i class="g v"></i><i class="g l plus"></i><svg><use href="#uni"/></svg>Unite</li>
        <li><i class="g v"></i><i class="g v"></i><i class="g l plus"></i><svg><use href="#sheet"/></svg>GND</li>
        <li><i class="g v"></i><i class="g l plus"></i><svg><use href="#sheet"/></svg>Lumped Port</li>
        <li><i class="g t plus"></i><svg><use href="#axes"/></svg>Coordinate Systems</li>
        <li><i class="g t plus"></i><svg><use href="#planes"/></svg>Planes</li>
        <li><i class="g l plus"></i><svg><use href="#lists"/></svg>Lists</li>
      </ul>
    </section>

    <section class="viewport">
      <svg class="scene" viewBox="845 237 1626 890" preserveAspectRatio="xMinYMin slice" role="img" aria-label="Surface current on the antenna">
        <defs>
          <pattern id="grid" x="855" y="638" width="135" height="135" patternUnits="userSpaceOnUse" patternTransform="skewY(-.4)">
            <path d="M1 0v135M55 0v135M82 0v135M109 0v135M0 8h135M0 35h135M0 62h135M0 89h135M0 116h135" stroke="#dedede" stroke-width="1.500"/><path d="M28 0v135" stroke="#dcdcdc" stroke-width="3"/>
          </pattern>
          <linearGradient id="patch"><stop stop-color="#d147c8"/><stop offset=".3" stop-color="#d049d8"/><stop offset=".75" stop-color="#d044dd"/><stop offset="1" stop-color="#cf48e6"/></linearGradient>
          <linearGradient id="feed" x2="0" y2="1"><stop stop-color="#d247cc" stop-opacity="0"/><stop offset=".6" stop-color="#e444cc"/><stop offset="1" stop-color="#ec38cc"/></linearGradient>
          <linearGradient id="strip" gradientUnits="userSpaceOnUse" x1="1030" y1="480" x2="2009" y2="480"><stop stop-color="#c93ddf"/><stop offset=".75" stop-color="#cb43dd"/><stop offset=".9" stop-color="#d443c8"/><stop offset="1" stop-color="#de45bd"/></linearGradient>
        </defs>
        <rect x="845" y="237" width="1626" height="890" fill="#f8f8f8"/>
        <rect x="1031" y="286" width="1434" height="60" fill="url(#grid)"/>
        <rect x="856" y="638" width="162" height="489" fill="url(#grid)"/>
        <rect x="2358" y="286" width="107" height="841" fill="url(#grid)"/>
        <g stroke="#dcdcdc" fill="none" stroke-width="2">
          <path d="M1040 241l1420-2" stroke-dasharray="5 22 3 34 4 51"/><path d="M1040 261l1420-8" stroke-dasharray="14 9 4 18 27 12 3 31"/><path d="M1046 270l1420-10" stroke-dasharray="3 11 8 26 4 8 19 22"/><path d="M1052 284l1410-8" stroke-dasharray="6 17 3 12 9 29"/><path d="M1053 260l1410-8" stroke-width="8" stroke-dasharray="1 26 1 13"/><path d="M1060 276l1405-8" stroke-width="12" stroke-dasharray="2 25 1 40 1 12"/>
        </g>
        <path d="M1018 343L2358 330 2362 730 1018 745z" fill="#ff22f7"/>
        <path d="M1018 744L2362 730 2365 1127H1021z" fill="#e633dd"/>
        <path d="M1018 343L1552 337V437L1043 442V483L2009 474V581L1621 585V719L1488 721V739L1461 740V693L1601 692 1599 558 1982 554V500L1018 510z" fill="url(#strip)"/>
        <path d="M1982 500l27-26v107l-388 4-22-26 383-5z" fill="#e33fc0"/>
        <path d="M1984 502l23-24v70l-23 6z" fill="#d24cc0"/>
        <path d="M1601 560h19v158l-84 1 16-26h48z" fill="#e245bd"/>
        <path d="M1580 700l38-2v20l-50 1z" fill="#c944da"/>
        <path d="M1018 542L1581 537V671L1058 676V743L1018 744z" fill="url(#patch)" stroke="#6d3a78" stroke-width="2"/>
        <path d="M1019 640h38v103h-38z" fill="url(#feed)"/>
        <path d="M1036 668l10-8h110l26 11-120 5zM1384 671l18-8h24l10 6z" fill="#ec3ac8"/>
        <path d="M1552 337V437L1043 442V483L2009 474V581L1621 585V719L1488 721V739M1461 740V693L1601 692 1599 558 1982 554V500L1018 510" fill="none" stroke="#6d3a78" stroke-width="2"/>
        <path d="M1371 747l50-1q-26 10-30 26l-4 16-15 10z" fill="#cb3fdc"/>
        <path d="M1406 802h44M1869 797h75" stroke="#f238c8" stroke-width="2"/>
        <path d="M1014 343L2358 330" stroke="#6e3070" stroke-width="6"/><path d="M1014 344L2358 331" stroke="#e8c4e6" stroke-width="2" stroke-dasharray="160 10"/>
        <path d="M1018 638v107l3 382" fill="none" stroke="#5c1a66" stroke-width="2"/><path d="M1021 900l1 120" stroke="#f0b8ee" stroke-width="2"/>
        <path d="M1018 690v50" stroke="#1520b0" stroke-width="4"/>
        <path d="M2358 330l7 797" stroke="#a830a4" stroke-width="2"/><path d="M2360 374l6 753" stroke="#4c3350" stroke-width="3" stroke-dasharray="90 46"/>
        <path d="M1018 745L2362 730" stroke="#4d3a50" stroke-width="4"/>
        <path d="M1043 739l11 5-11 5z" fill="#103c14"/>
        <path d="M2362 730h72" stroke="#0a5f18" stroke-width="4"/><path d="M2433 719l30 11-30 11z" fill="#087010"/>
        <text x="2459" y="730" class="axis-x">X</text>
        <path d="M1006 714l12 30" stroke="#c8381c" stroke-width="3" stroke-dasharray="8 2"/><circle cx="1002" cy="706" r="9" fill="#c81408"/>
        <text x="1001" y="701" class="axis-z">Z</text>
        <path d="M1384 1100h546v7h-546z" stroke="#111" stroke-width="2"/><path d="M1385 1101h272v5h-272z" fill="#fff"/>
        <g class="scale"><text x="1384" y="1122">0</text><text x="1657" y="1122">10</text><text x="1949" y="1122">20 (mm)</text></g>
        <path d="M2359 442v25l5-5 4 9 4-2-4-9h7z" fill="#fff" stroke="#223" stroke-width="1.500"/>
      </svg>
      <div class="legend">
        <div class="legend-box">
          <h3>Jsurf[A_per_m]</h3>
          <div class="legend-body">
            <div class="ramp"><i class="r1"></i><i class="r2"></i><i class="r3"></i><i class="r4"></i><i class="r5"></i><i class="r6"></i><i class="r7"></i><i class="r8"></i><i class="r9"></i><i class="r10"></i><i class="r11"></i><i class="r12"></i><i class="r13"></i><i class="r14"></i><i class="r15"></i><i class="r16"></i></div>
            <ol><li>5.0000e+000</li><li>4.6439e+000</li><li>4.2878e+000</li><li>3.9318e+000</li><li>3.5757e+000</li><li>3.2196e+000</li><li>2.8635e+000</li><li>2.5074e+000</li><li>2.1514e+000</li><li>1.7953e+000</li><li>1.4392e+000</li><li>1.0831e+000</li><li>7.2703e-001</li><li>3.7095e-001</li><li>1.4868e-002</li></ol>
          </div>
        </div>
        <svg class="ghost" viewBox="0 0 20 300" aria-hidden="true"><path d="M0 2h18M0 6h18M1 2v4M1 50v90M5 50v90M2 187v90M6 187v90" stroke="#7a3a80" stroke-width="1.500" fill="none"/></svg>
      </div>
    </section>
  </div>

  <div class="output">
    <section class="messages">
      <h2 class="vcap"><span>Message Manager</span><span class="vbtns"><i class="left"></i><b>✕</b></span></h2>
      <div class="msg-box">
        <ul>
          <li><svg><use href="#i"/></svg>Normal completion of simulation on server: Local Machine. (9:42:05 PM  Sep 28, 2017)</li>
          <li><svg><use href="#i"/></svg>Solution Setup 'Setup_850M', Sweep 'Sweep': Interpolating sweep converged. (9:44:23 PM  Sep 28, 2017)</li>
          <li><svg><use href="#i"/></svg>Normal completion of simulation on server: Local Machine. (9:44:23 PM  Sep 28, 2017)</li>
          <li><svg><use href="#i"/></svg>Solution Setup 'Setup_850M', Sweep 'Sweep': Interpolating sweep converged. (9:47:03 PM  Sep 28, 2017)</li>
          <li><svg><use href="#i"/></svg>Normal completion of simulation on server: Local Machine. (9:47:03 PM  Sep 28, 2017)</li>
          <li><svg><use href="#x"/></svg>Simulation was aborted by user on server: Local Machine. (9:50:07 PM  Sep 28, 2017)</li>
          <li><svg><use href="#i"/></svg>Solution Setup 'Setup_850M', Sweep 'Sweep': Interpolating sweep converged. (9:51:14 PM  Sep 28, 2017)</li>
          <li><svg><use href="#i"/></svg>Normal completion of simulation on server: Local Machine. (9:51:14 PM  Sep 28, 2017)</li>
        </ul>
        <div class="classic"><span><i class="up"></i></span><span class="knob"></span><span><i class="down"></i></span></div>
      </div>
    </section>
    <section class="progress">
      <h2 class="vcap"><span>Progress</span><span class="vbtns"><i class="left"></i><b>✕</b></span></h2>
      <div class="progress-box"></div>
    </section>
  </div>

  <footer class="status"><span>1 objects are selected</span><i></i><i></i><i></i></footer>

  <div class="taskbar">
    <button class="start" aria-label="Start"><svg viewBox="0 0 48 48"><circle cx="24" cy="24" r="23" fill="url(#orb)" stroke="#1b3048"/><path d="M12 16q5-4 10-2l-2 9q-5-2-10 1z" fill="#e8582a"/><path d="M24 14q6 3 12 0l-3 9q-5 3-11 0z" fill="#8cc63e"/><path d="M9 26q5-3 10-1l-2 9q-5-3-9 0z" fill="#3fa0e0"/><path d="M21 26q6 3 11 0l-2 9q-6 3-11-1z" fill="#ffc83c"/></svg></button>
    <i class="dots"></i>
    <button class="task narrow" aria-label="QQ"><svg viewBox="0 0 48 48"><path d="M8 24q-6 8-5 18h42q1-10-5-18z" fill="#111"/><ellipse cx="24" cy="40" rx="12" ry="12" fill="#fff"/><ellipse cx="24" cy="16" rx="14" ry="15" fill="#111"/><ellipse cx="19" cy="12" rx="3" ry="4" fill="#fff"/><ellipse cx="29" cy="12" rx="3" ry="4" fill="#fff"/><circle cx="20" cy="13" r="1" /><circle cx="28" cy="13" r="1"/><ellipse cx="24" cy="21" rx="9" ry="3" fill="#f5a21c"/><path d="M9 24q15 10 30 0l1 7q-8 4-16 4v8h-6v-9q-6-1-10-4z" fill="#e8201c"/></svg></button>
    <button class="task flat" aria-label="Cloud drive"><svg viewBox="0 0 48 48"><path d="M0 0h48v48H0z" fill="#4cb1f2"/><g fill="none" stroke="#fff" stroke-width="5"><circle cx="24" cy="19" r="7"/><circle cx="14" cy="35" r="7"/><circle cx="34" cy="35" r="7"/></g></svg></button>
    <button class="task" aria-label="Explorer"><svg viewBox="0 0 48 48"><path d="M4 6l3-5h15l2 5h18v10H4z" fill="#f0c860" stroke="#c89a3c"/><path d="M8 4h12v4H8zM28 7h12v5H28z" fill="#fff" stroke="#999"/><path d="M2 14h44v34H2z" fill="#f8e08c" stroke="#d8b458"/><path d="M8 34h34v14H8z" fill="#8ecdea" stroke="#5a9ec4"/></svg></button>
    <button class="task" aria-label="Visio"><svg viewBox="0 0 48 48"><path d="M4 4L12 1h32v47H4z" fill="#b8cff0" stroke="#4a6cb8"/><path d="M8 10l20-3v34H8z" fill="#dce8fa"/><path d="M9 10h7l5 20 5-20h6l-8 30h-6z" fill="#1c4aa8"/><path d="M32 26l12 9-12 9zM22 38h10v10H22z" fill="#f4f8ff" stroke="#9ab"/></svg></button>
    <button class="task" aria-label="Recorder"><svg viewBox="0 0 48 48"><path d="M2 14l4-4h26v34H2z" fill="#b4b4b4" stroke="#222" stroke-width="2"/><path d="M32 22h6l8-6v26l-8-6h-6z" fill="#bbb" stroke="#222" stroke-width="2"/><path d="M3 9q12-8 22-3l5 2" fill="none" stroke="#333" stroke-width="3"/><path d="M7 18h5v7H7zM16 18h5v7h-5zM24 16v22M7 28h16" fill="#eee" stroke="#222"/><path d="M5 33h5v7H5z" fill="#e33"/><path d="M10 33h5v7h-5z" fill="#3b3"/><path d="M15 33h5v7h-5z" fill="#33e"/></svg></button>
    <button class="task" aria-label="Paint"><svg viewBox="0 0 48 48"><path d="M4 34q0-22 24-24 16 2 16 18-2 20-24 20-14-2-16-14z" fill="#cfe4f4" stroke="#8ab"/><circle cx="12" cy="32" r="4" fill="#e0483a"/><circle cx="18" cy="21" r="4" fill="#6aba4a"/><circle cx="28" cy="17" r="4" fill="#f0c030"/><path d="M26 46L40 18" stroke="#d8862c" stroke-width="4"/><path d="M38 18q-6-8-1-15 4 3 8-2 4 10-3 18z" fill="#c09468"/></svg></button>
    <button class="task" aria-label="Calculator"><svg viewBox="0 0 48 48"><path d="M9 2h30v46H9z" fill="#a8cdea" stroke="#5f8fb8" stroke-width="2"/><path d="M12 8h24v14H12z" fill="#eaf2f8" stroke="#7a9ab4"/><path d="M12 5h24v3H12z" fill="#f0b050"/><path d="M12 29h24M12 36h24M12 43h24" stroke="#f4fafe" stroke-width="5" stroke-dasharray="5 1"/><path d="M30 11h3v8h-3z" fill="none" stroke="#335"/></svg></button>
    <button class="task" aria-label="HFSS"><svg><use href="#ansoft"/></svg></button>
    <div class="tray">
      <i class="dots"></i>
      <span class="lang">CH</span>
      <svg viewBox="0 0 24 24"><path d="M1 9h22v12H1z" fill="#d8d8d8" stroke="#666"/><path d="M4 12h16M4 15h16M6 18h12" stroke="#666" stroke-width="1.500"/><path d="M8 8q2-5 8-3" fill="none" stroke="#888"/></svg>
      <svg viewBox="0 0 24 24"><circle cx="12" cy="12" r="11" fill="#0a1cb0" stroke="#889"/><path d="M8 9q0-4 4-4t4 3q0 2-3 4v2M13 16v3" fill="none" stroke="#fff" stroke-width="2.500"/></svg>
      <svg class="tall" viewBox="0 0 24 40"><path d="M10 2h7v5h-3M7 5h7v5H7z" fill="none" stroke="#fff" stroke-width="1.500"/><path d="M8 24h7l-4 4z" fill="#fff"/></svg>
      <svg class="chev" viewBox="0 0 24 24"><path d="M6 17l6-7 6 7z" fill="#fff"/></svg>
      <svg class="low" viewBox="0 0 26 26"><path d="M1 3h24v20H1z" fill="#1cb83c"/><path d="M2 13l4-7 3 14 4-15 3 15 4-14 4 7" fill="none" stroke="#14209c" stroke-width="2.500"/><circle cx="14" cy="14" r="4" fill="#c0203c"/></svg>
      <svg class="low" viewBox="0 0 26 26"><circle cx="13" cy="13" r="12" fill="#f4d81c"/><path d="M7 3q12-4 17 5l-4 4Q14 4 7 3z" fill="#2a8a2c"/><path d="M13 7v12M7 13h12" stroke="#0c5a14" stroke-width="3.500"/></svg>
      <svg class="low" viewBox="0 0 26 26"><circle cx="13" cy="13" r="12" fill="#f6f4f2"/><circle cx="16" cy="9" r="5" fill="#f0602c"/><path d="M7 9v6" stroke="#375" stroke-width="2"/><path d="M10 18h8v6h-8z" fill="#f0b8a8"/></svg>
      <div class="clock"><time>10:05 PM</time><time>9/28/2017</time></div>
      <button class="peek" aria-label="Show desktop"></button>
    </div>
    <div class="toast">屏幕录像专家未注册</div>
  </div>

  <div class="caption">全网通单极子设计实例</div>
</div>
</main>
</body>
</html>
```
FILE: styles.css
```css
:root { --cell: 20px/24px "Noto Sans CJK SC", monospace; }
* { box-sizing: border-box; }
body { margin: 0; height: 100vh; overflow: hidden; display: flex; flex-direction: column; background: #000; color: #1a1a1a; font: 20px/24px "Noto Sans", "Noto Sans CJK SC", sans-serif; }
button { font: inherit; font-feature-settings: inherit; color: inherit; background: none; border: 0; padding: 0; margin: 0; }
ul, ol { list-style: none; margin: 0; padding: 0; }
h1, h2, h3 { margin: 0; font-weight: 400; }
svg { display: block; flex: none; }
.defs { position: absolute; width: 0; height: 0; }

.player { height: 59px; flex: none; display: flex; align-items: center; background: #262626; color: #929292; }
.brand { display: flex; align-items: center; gap: 21px; padding-left: 12px; }
.avatar { width: 40px; height: 40px; }
.login { width: 69px; height: 33px; border-radius: 5px; background: #4a4a4a; color: #fff; font: 18px "Noto Sans CJK SC", sans-serif; }
.video-name { flex: 1; text-align: center; font: 20px/24px "Noto Sans CJK SC", sans-serif; }
.player-tools { display: flex; align-items: center; gap: 16px; padding-right: 12px; }
.player-tools svg { width: 26px; height: 26px; fill: none; stroke: #a0a0a0; stroke-width: 2; }
.player-tools button:first-child svg { width: 38px; height: 30px; stroke: none; }
.rule { width: 1px; height: 18px; background: #5a5a5a; }

.stage { flex: 1; min-height: 0; display: flex; padding-right: 30px; }
.edge { flex: none; width: 5px; height: 167px; margin: 283px 78px 0 0; background: #12e6ee; }
.app { flex: 1; min-width: 0; position: relative; display: flex; flex-direction: column; background: #f0f0f0; }

.titlebar { height: 32px; flex: none; display: flex; align-items: center; background: linear-gradient(#92aed0, #9cbcd8 50%, #b6cee8); }
.app-icon { width: 25px; height: 25px; }
.app-name { flex: 1; padding: 0 0 2px 9px; color: #111; white-space: pre; }
.win { display: flex; gap: 4px; padding: 0 3px 3px 0; }
.win button { width: 47px; height: 27px; display: grid; place-items: center; border: 1px solid #50647c; border-radius: 3px; box-shadow: inset 0 0 0 1px #c8daea; background: linear-gradient(#b4cce4 50%, #8faccb 50%, #a8c4de); }
.win .close { border-color: #4a1a1a; box-shadow: inset 0 0 0 1px #e8a090; background: linear-gradient(#e29a86 50%, #c2401e 50%, #d0603c); }
.win svg { width: 20px; height: 20px; }

.menubar { height: 30px; flex: none; display: flex; align-items: center; gap: 17px; padding-left: 5px; border-bottom: 1px solid #a4acbc; background: linear-gradient(#f2f6fa 20%, #e4e8f2 30%, #ccd5ea 40%, #d8dff0); }
.menubar a { color: #111; text-decoration: none; padding-top: 2px; }
.doc { width: 24px; height: 20px; margin-right: -6px; }
.mdi { margin-left: auto; display: flex; gap: 3px; padding-right: 1px; }
.mdi button { width: 27px; height: 28px; display: grid; place-items: center; border: 1px solid #9aa4b4; background: #dce9f7; }
.mdi svg { width: 14px; height: 14px; fill: none; stroke: #5e7888; }

.bars { flex: none; height: 113px; }
.bar { height: 38px; display: flex; align-items: center; padding-bottom: 1px; }
.bar button { width: 29px; height: 29px; flex: none; display: grid; place-items: center; }
.bar button.on { border: 1px solid #4a9be0; background: #cfe6fa; }
.bar svg { width: 20px; height: 20px; }
.grip { width: 20px; height: 24px; flex: none; background: repeating-linear-gradient(#333 0 2px, #f0f0f0 2px 3px) 13px 0 / 4px 100% no-repeat; }
.grip:first-child { width: 8px; background-position: 0 0; }
.sep { width: 9px; height: 27px; flex: none; background: linear-gradient(#b4b4b4, #b4b4b4) 4px 0 / 1px 100% no-repeat; }
.combo { position: relative; flex: none; height: 27px; }
.combo select { width: 100%; height: 100%; appearance: none; border: 2px solid; border-color: #777 #ddd #ddd #777; border-radius: 0; background: #f8f8f8; padding: 0 2px; font: var(--cell); font-feature-settings: "hwid"; color: #111; }
.combo::after { content: ""; position: absolute; right: 2px; top: 2px; width: 24px; height: 23px; border: 2px solid; border-color: #f8f8f8 #777 #777 #f8f8f8; background: #efefef; }
.combo::before { content: ""; position: absolute; z-index: 1; right: 8px; top: 11px; border: 6px solid transparent; border-top: 7px solid #000; border-bottom: 0; }
.wide { width: 126px; }
.medium { width: 100px; }
.small { width: 62px; }

.work { flex: 1; min-height: 0; display: flex; padding-top: 1px; }
.dock { width: 360px; flex: none; display: flex; flex-direction: column; font: var(--cell); font-feature-settings: "hwid"; }
.panel { display: flex; flex-direction: column; align-items: flex-start; padding-bottom: 17px; border-bottom: 2px solid #888; }
.panel.grow { border: 0; padding: 3px 0 10px; }
.grow { flex: 1; min-height: 0; }
.cap { width: 357px; height: 18px; margin-left: 1px; padding: 0 6px 2px 2px; display: flex; align-items: center; justify-content: space-between; border: 1px solid #a0a0a0; border-left-color: #ddd; border-radius: 2px; font: 13px/14px "Noto Sans", sans-serif; }
.cap-btns { display: flex; align-items: center; gap: 8px; }
.cap b, .vcap b { font-size: 11px; line-height: 12px; }
.up, .down, .left, .right { display: block; width: 0; height: 0; border: 5px solid transparent; }
.up { border-top: 0; border-bottom-color: #222; border-bottom-width: 6px; }
.down { border-bottom: 0; border-top-color: #222; border-top-width: 6px; }
.left { border-left: 0; border-right-color: #222; border-right-width: 6px; }
.right { border-right: 0; border-left-color: #222; border-left-width: 6px; }
.cap .up { border-width: 0 4px 4px; }
.frame { width: 343px; margin: 6px 0 0 9px; padding: 4px 5px 3px 3px; border: solid; border-width: 1px 2px 2px 1px; border-color: #e0e0e0 #808080 #808080 #e0e0e0; }
.pm-frame { height: 314px; }
.pm { height: 100%; display: grid; grid-template: 1fr 24px / minmax(0, 1fr) 24px; border: solid #777; border-width: 2px 0 0 2px; background: #f8f8f8; }
.pm-tree { padding-left: 3px; }
.pm-tree li { height: 25px; display: flex; align-items: center; white-space: pre; }
.pm-tree svg, .model-tree svg { width: 19px; height: 19px; margin-right: 7px; }
.sel { background: #efefef; padding-right: 5px; }
.vbar { display: flex; flex-direction: column; align-items: center; padding: 11px 0 10px; background: #f2f2f2; }
.vbar .thumb { width: 23px; height: 104px; margin: 118px 0 auto; border: 1px solid #999; border-radius: 2px; background: repeating-linear-gradient(#777 0 1px, transparent 1px 4px) 50% 50% / 11px 11px no-repeat, linear-gradient(90deg, #f4f4f4, #c8cace); }
.hbar { display: flex; align-items: center; padding: 0 11px 0 9px; background: #eee; height: 24px; }
.hbar .thumb { width: 165px; height: 24px; margin: 0 auto 0 56px; border: 1px solid #999; border-radius: 2px; background: repeating-linear-gradient(90deg, #777 0 1px, transparent 1px 5px) 50% 50% / 11px 11px no-repeat, linear-gradient(#f4f4f4, #c0c2c8); }
.hbar.long { margin-top: auto; background: none; }
.hbar.long .thumb { width: 208px; margin-left: 12px; }
.tab { height: 21px; margin-left: 9px; border: solid #777; border-width: 0 2px 2px 0; border-radius: 0 0 3px 0; line-height: 20px; }
.project-tab { width: 87px; }
.attribute-tab { width: 107px; }

.g { position: relative; flex: none; width: 28px; align-self: stretch; }
.g::before { content: ""; position: absolute; left: 10px; top: 0; bottom: 0; width: 16px; }
.v::before { border-left: 1px dotted #888; }
.l::before { border: dotted #888; border-width: 0 0 1px 1px; bottom: 50%; }
.t::before, .d::before { background: linear-gradient(90deg, #888 50%, transparent 50%) 0 50% / 2px 1px repeat-x; border-left: 1px dotted #888; }
.d::before { top: 50%; background-position: 0 0; }
.minus::after, .plus::after { content: ""; position: absolute; left: 5px; top: 50%; width: 11px; height: 11px; margin-top: -6px; border: 1px solid #888; background: linear-gradient(#111, #111) 50% 50% / 5px 1px no-repeat, #f8f8f8; }
.plus::after { background: linear-gradient(#111, #111) 50% 50% / 5px 1px no-repeat, linear-gradient(#111, #111) 50% 50% / 1px 5px no-repeat, #f8f8f8; }

.props { height: 100%; display: flex; flex-direction: column; border: solid #777; border-width: 2px 0 0 2px; }
.props table { width: 100%; table-layout: fixed; border-collapse: collapse; }
.c1 { width: 79px; }
.c2 { width: 191px; }
.c3 { width: 55px; }
.props th { height: 25px; padding: 0; font-weight: 400; line-height: 22px; border: solid #777; border-width: 0 2px 2px 0; }
.props th:last-child, .props td:last-child { border-right: 0; }
.props td { height: 25px; padding: 0 2px; line-height: 22px; white-space: pre; border: solid #c4c4c4; border-width: 0 1px 1px 0; }
.props .mid { text-align: center; }
.props .btn { padding: 0 2px 0 3px; }
.props .btn button { display: block; width: 100%; height: 20px; line-height: 18px; border: solid #777; border-width: 0 2px 2px 0; }
.props input { appearance: none; display: block; position: relative; width: 17px; height: 17px; margin: 0 auto; border: solid #777; border-width: 2px 0 0 2px; background: #f6f6f6; }
.props input:checked::after { content: ""; position: absolute; left: 5px; top: 1px; width: 5px; height: 9px; border: solid #111; border-width: 0 3px 3px 0; transform: rotate(42deg); }

.model-pane { width: 386px; flex: none; margin-left: 9px; border: solid #808080; border-width: 2px 0 0 2px; background: #f8f8f8; }
.model-tree { display: grid; grid-auto-rows: 1fr; height: 467px; }
.model-tree li { display: flex; align-items: center; min-height: 0; white-space: pre; }
.model-tree .g { width: 27px; }

.viewport { flex: 1; min-width: 0; position: relative; margin-left: 5px; border: solid #808080; border-width: 2px 0 0 2px; background: #f8f8f8; }
.scene { width: 100%; height: 100%; }
.scale { font: 16px "Liberation Sans", sans-serif; text-anchor: middle; fill: #3a0838; }
.axis-x { font: 15px "Liberation Sans", sans-serif; fill: #087010; }
.axis-z { font: bold 13px "Liberation Sans", sans-serif; fill: #e02010; }
.legend { position: absolute; left: 0; top: 0; width: 185px; height: 401px; padding: 8px 0 0 7px; background: #f8f8f8; }
.legend-box { width: 170px; height: 384px; padding: 7px 0 0 8px; border: 2px solid #444; }
.legend h3 { font: bold 17px/22px "DejaVu Sans Mono", monospace; }
.legend-body { display: flex; padding-top: 10px; }
.ramp { width: 44px; height: 328px; display: grid; grid-auto-rows: 1fr; }
.legend ol { height: 308px; margin: 10px 0 0 13px; display: grid; grid-auto-rows: 1fr; align-items: center; font: 14px/20px "DejaVu Sans Mono", monospace; }
.legend li { min-height: 0; }
.ghost { position: absolute; left: 169px; top: 102px; width: 20px; height: 300px; }
.r1 { background: #ff1a00; } .r2 { background: #ff5000; } .r3 { background: #ff8c00; } .r4 { background: #ffc000; }
.r5 { background: #eae800; } .r6 { background: #a4e000; } .r7 { background: #54dc00; } .r8 { background: #0cd400; }
.r9 { background: #00d41c; } .r10 { background: #00d85c; } .r11 { background: #00dca8; } .r12 { background: #00e0ee; }
.r13 { background: #00b4ff; } .r14 { background: #0080ff; } .r15 { background: #0048ff; } .r16 { background: #000cff; }

.output { height: 185px; flex: none; display: flex; padding-top: 6px; }
.messages, .progress { display: flex; border-top: 3px solid #888; padding: 2px 0 3px 1px; }
.messages { width: 1198px; flex: none; border-right: 2px solid #888; }
.progress { flex: 1; min-width: 0; padding: 2px 5px 3px 3px; }
.vcap { width: 17px; flex: none; margin-right: 2px; padding: 4px 0; writing-mode: vertical-rl; transform: rotate(180deg); display: flex; justify-content: space-between; align-items: center; border: 1px solid #a0a0a0; border-radius: 2px; font: 12px/15px "Noto Sans", sans-serif; }
.vbtns { display: flex; align-items: center; gap: 9px; }
.vbtns .left { border-width: 4px 0 4px 4px; border-color: transparent transparent transparent #222; }
.msg-box { width: 1167px; display: flex; border: 2px solid; border-color: #888 #b0b0b0 #a0a0a0 #888; background: #f8f8f8; margin-bottom: 2px; overflow: hidden; font: var(--cell); font-feature-settings: "hwid"; }
.msg-box ul { flex: 1; min-width: 0; height: 182px; padding-top: 3px; margin-left: 60px; display: grid; grid-auto-rows: 1fr; border-left: 1px dotted #999; }
.msg-box li { display: flex; align-items: center; min-height: 0; white-space: pre; }
.msg-box li::before { content: ""; width: 14px; margin-right: 20px; border-top: 1px dotted #999; }
.msg-box svg { width: 20px; height: 20px; margin-right: 6px; }
.classic { width: 25px; height: 166px; flex: none; display: flex; flex-direction: column; background: #efefef; }
.classic span { height: 26px; display: grid; place-items: center; border: solid; border-width: 1px 2px 2px 1px; border-color: #fff #888 #888 #fff; background: #f4f4f4; }
.classic .knob { height: 32px; margin: auto 0 27px; }
.classic .up { border-width: 0 6px 7px; }
.classic .down { border-width: 7px 6px 0; }
.progress-box { flex: 1; border: solid; border-width: 2px; border-color: #808080 #e6e6e6 #e6e6e6 #808080; background: #f8f8f8; margin-bottom: 4px; }

.status { height: 32px; flex: none; display: flex; align-items: flex-end; gap: 4px; border-top: 1px solid #b4b4b4; }
.status span { margin-right: auto; align-self: center; padding-top: 5px; }
.status i { width: 44px; height: 24px; margin-bottom: 2px; border: solid #a8a8a8; border-width: 1px 0 0 1px; }
.status i:nth-of-type(n+2) { width: 53px; }

.taskbar { height: 42px; flex: none; position: relative; display: flex; align-items: flex-start; gap: 3px; overflow: hidden; border-top: 2px solid #56667c; background: linear-gradient(90deg, #7c8ca8 0 200px, #9cbcd8 300px calc(100% - 510px), #7c8ca8 calc(100% - 450px)); }
.start { width: 78px; padding: 3px 0 0 13px; }
.start svg { width: 49px; height: 49px; }
.dots { width: 15px; height: 36px; margin: 4px 0 0; flex: none; background: radial-gradient(#303848 30%, transparent 40%) 0 0 / 5px 9px; }
.start + .dots { margin: 4px 8px 0 95px; }
.task { width: 84px; height: 52px; flex: none; display: grid; justify-items: center; padding-top: 3px; border: 2px solid #4c5e7c; border-radius: 4px; background: linear-gradient(120deg, #dfe6f2, #a4b4d4); }
.task.narrow { width: 77px; margin-right: 7px; }
.task.flat { border-color: transparent; background: none; }
.task svg { width: 50px; height: 50px; }
.tray { margin-left: auto; display: flex; align-items: flex-start; color: #eef3fa; }
.tray svg { width: 24px; height: 24px; margin: 13px 0 0 9px; }
.tray .tall { height: 40px; margin: 11px 0 0 5px; }
.tray .chev { margin: 15px 4px 0 15px; }
.tray .low { width: 26px; height: 26px; margin: 16px 0 0 11px; }
.lang { margin: 14px 3px 0 13px; font: var(--cell); font-feature-settings: "hwid"; }
.clock { width: 130px; text-align: center; padding-top: 4px; }
.clock time { display: block; line-height: 25px; }
.peek { width: 17px; height: 42px; border-left: 2px solid #48566c; background: linear-gradient(135deg, #8e9cae, #5c6a80); }
.toast { position: absolute; left: 1382px; top: 35px; width: 279px; height: 22px; padding-left: 4px; background: #f6f6f6; color: #d02010; font: bold 17px/18px "Noto Sans CJK SC", sans-serif; }

.caption { position: absolute; left: 272px; top: 642px; width: 675px; height: 323px; display: grid; place-items: center; border: 2px solid #ee1c24; border-radius: 66px; color: #ee1c24; font: 300 41px/48px "Noto Sans CJK SC", sans-serif; }
```
